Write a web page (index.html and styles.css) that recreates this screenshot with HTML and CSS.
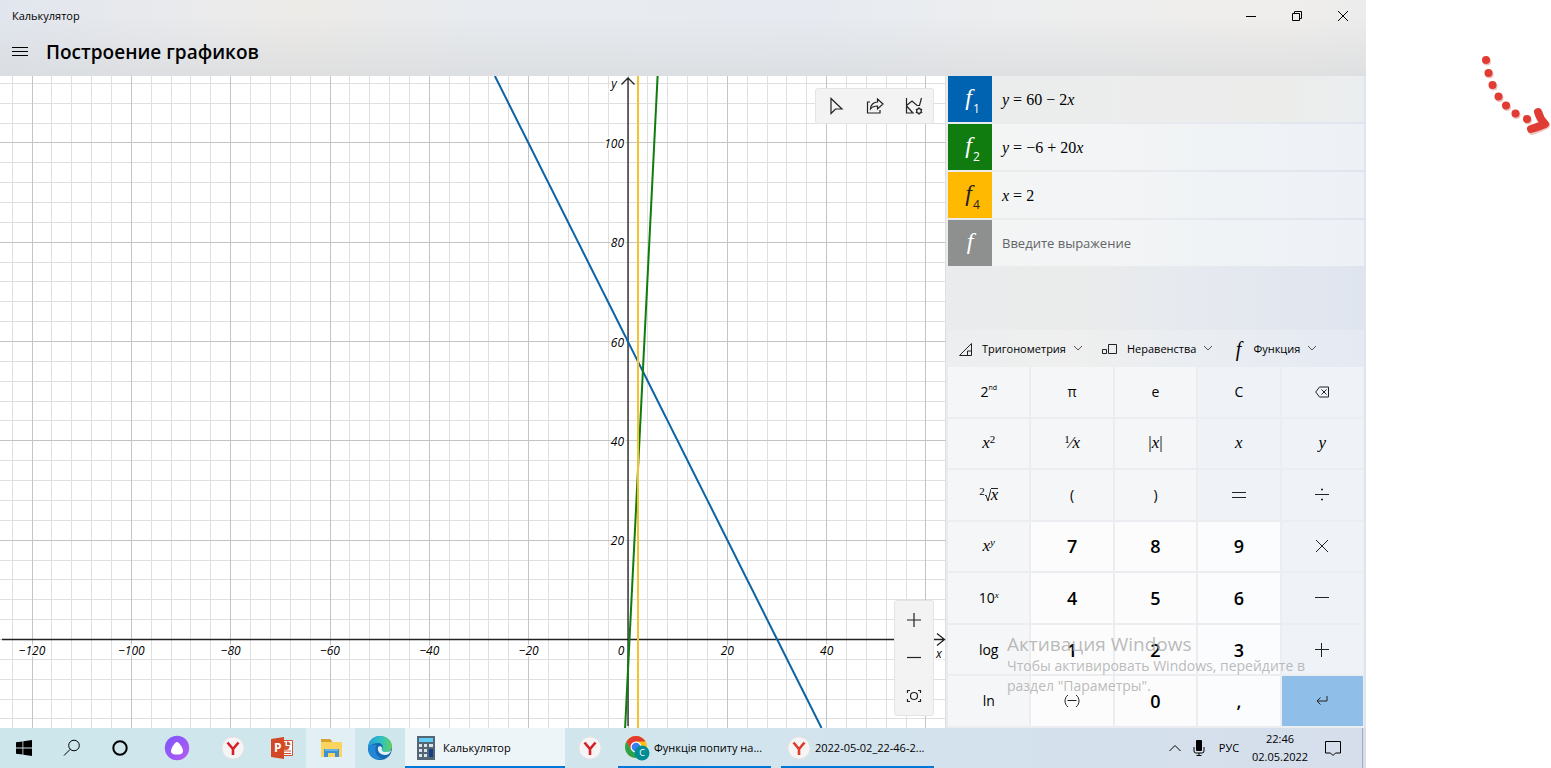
FILE: index.html
```html
<!DOCTYPE html>
<html lang="ru">
<head>
<meta charset="utf-8">
<title>Калькулятор</title>
<link rel="stylesheet" href="styles.css">
</head>
<body>
<div class="desktop">
  <main class="app">
    <header class="header">
      <div class="titlebar">
        <span class="app-name">Калькулятор</span>
        <div class="window-controls">
          <button aria-label="Свернуть"><svg width="10" height="10" viewBox="0 0 10 10"><path d="M0 5.5h10"/></svg></button>
          <button aria-label="Восстановить"><svg width="10" height="10" viewBox="0 0 10 10"><path d="M.5 2.5h7v7h-7zM2.5 2.5v-2h7v7h-2"/></svg></button>
          <button aria-label="Закрыть"><svg width="10" height="10" viewBox="0 0 10 10"><path d="M0 0l10 10M10 0L0 10"/></svg></button>
        </div>
      </div>
      <div class="mode">
        <button class="menu" aria-label="Меню"><svg width="16" height="10" viewBox="0 0 16 10"><path d="M0 .5h16M0 4.5h16M0 8.5h16"/></svg></button>
        <h1>Построение графиков</h1>
      </div>
    </header>

    <div class="work">
      <section class="plot">
        <svg class="chart" viewBox="0 0 946 652" preserveAspectRatio="xMidYMid slice">
          <g id="grid"></g>
          <path class="axis" d="M2 563.5H944M937 557.500l7.500 6l-7.500 6"/>
          <path class="axis" d="M628 650V3M621.500 8.500l6.500-6.500l6.500 6.500"/>
          <path class="curve blue" d="M494.900 0L821.500 652"/>
          <path class="curve green" d="M657.600 0L625.100 652"/>
          <path class="curve yellow" d="M638 0V652"/>
          <g id="labels">
            <text x="614" y="12" text-anchor="middle">y</text>
            <text x="939" y="582" text-anchor="middle">x</text>
          </g>
        </svg>
        <div class="float tools">
          <button aria-label="Трассировка"><svg width="20" height="20" viewBox="0 0 20 20"><path d="M5 2.500v15l4.500-4.500H16z"/></svg></button>
          <button aria-label="Поделиться"><svg width="20" height="20" viewBox="0 0 20 20"><path d="M5 6H2.500v11H15v-3M12.500 3l5.500 5-5.500 5v-3C9 10 7 11 5.500 13c0-4 3-7 7-7z"/></svg></button>
          <button aria-label="Параметры графа"><svg width="20" height="20" viewBox="0 0 20 20"><path d="M2.500 2v15H10M2.500 9.500L8 5l5 4.500h2.500L17.500 2M2.500 10l6 6.500"/><circle cx="15" cy="15" r="2.300"/><path d="M15 11.300v1.400m0 4.600v1.400m-3.200-5.500l1.200.7m4 2.200l1.200.7m0-3.600l-1.200.7m-4 2.200l-1.200.7"/></svg></button>
        </div>
        <div class="float zoom">
          <button aria-label="Увеличить"><svg width="16" height="16" viewBox="0 0 16 16"><path d="M1 8h14M8 1v14"/></svg></button>
          <button aria-label="Уменьшить"><svg width="16" height="16" viewBox="0 0 16 16"><path d="M1 7.500h14"/></svg></button>
          <button aria-label="По размеру"><svg width="16" height="16" viewBox="0 0 16 16"><path d="M4 2.500H1.500V5M12 2.500h2.500V5M4 13.500H1.500V11M12 13.500h2.500V11"/><circle cx="8" cy="8" r="3.500"/></svg></button>
        </div>
      </section>

      <section class="panel">
        <div class="equations">
          <div class="equation"><button class="fn fn-blue">f<sub>1</sub></button><div class="formula"><i>y</i> = 60 − 2<i>x</i></div></div>
          <div class="equation"><button class="fn fn-green">f<sub>2</sub></button><div class="formula"><i>y</i> = −6 + 20<i>x</i></div></div>
          <div class="equation"><button class="fn fn-yellow">f<sub>4</sub></button><div class="formula"><i>x</i> = 2</div></div>
          <div class="equation"><button class="fn fn-gray">f</button><input class="formula" type="text" aria-label="Выражение" placeholder="Введите выражение"></div>
        </div>
        <div class="categories">
          <button><svg width="16" height="16" viewBox="0 0 16 16"><path d="M1.500 14.500h12v-12zM9.500 14v-4h4"/></svg>Тригонометрия<svg class="chev" width="8" height="5" viewBox="0 0 8 5"><path d="M0 0l4 4 4-4"/></svg></button>
          <button><svg width="18" height="16" viewBox="0 0 18 16"><path d="M1.500 8.500h4v4h-4zM7.500 3.500h8v9h-8z"/></svg>Неравенства<svg class="chev" width="8" height="5" viewBox="0 0 8 5"><path d="M0 0l4 4 4-4"/></svg></button>
          <button><span class="f-icon">f</span>Функция<svg class="chev" width="8" height="5" viewBox="0 0 8 5"><path d="M0 0l4 4 4-4"/></svg></button>
        </div>
        <div class="keypad">
          <button class="second">2<sup>nd</sup></button><button>π</button><button>e</button><button>C</button>
          <button aria-label="Удалить"><svg width="14" height="12" viewBox="0 0 14 12"><path d="M4.500 1h9v10h-9L.7 6zM6.500 3.500l5 5m0-5l-5 5"/></svg></button>
          <button class="math"><span><i>x</i><sup>2</sup></span></button><button class="math"><span><sup>1</sup>⁄<i>x</i></span></button><button class="math"><span>|<i>x</i>|</span></button><button class="math"><i>x</i></button><button class="math"><i>y</i></button>
          <button class="math root"><sup>2</sup><svg width="6" height="14" viewBox="0 0 6 14"><path d="M0 8l1-1 2 6L6 1"/></svg><i class="radicand">x</i></button><button>(</button><button>)</button>
          <button aria-label="Равно"><svg width="14" height="14" viewBox="0 0 14 14"><path d="M0 4.500h14M0 9.500h14"/></svg></button>
          <button aria-label="Разделить"><svg width="14" height="14" viewBox="0 0 14 14"><path d="M0 6.500h14M6.500 1h1v1h-1zM6.500 11h1v1h-1z"/></svg></button>
          <button class="math"><span><i>x</i><sup><i>y</i></sup></span></button><button class="digit">7</button><button class="digit">8</button><button class="digit">9</button>
          <button aria-label="Умножить"><svg width="14" height="14" viewBox="0 0 14 14"><path d="M1 1l12 12M13 1L1 13"/></svg></button>
          <button><span>10<sup class="serif"><i>x</i></sup></span></button><button class="digit">4</button><button class="digit">5</button><button class="digit">6</button>
          <button aria-label="Вычесть"><svg width="14" height="14" viewBox="0 0 14 14"><path d="M0 6.500h14"/></svg></button>
          <button>log</button><button class="digit">1</button><button class="digit">2</button><button class="digit">3</button>
          <button aria-label="Сложить"><svg width="14" height="14" viewBox="0 0 14 14"><path d="M0 6.500h14M6.500 0v14"/></svg></button>
          <button>ln</button>
          <button class="digit" aria-label="Изменить знак"><svg width="16" height="14" viewBox="0 0 16 14"><path d="M4 1C0 4 0 10 4 13M12 1c4 3 4 9 0 12M3.500 6.500h9"/></svg></button>
          <button class="digit">0</button><button class="digit">,</button>
          <button class="enter" aria-label="Ввод"><svg width="12" height="12" viewBox="0 0 12 12"><path d="M11 1v5H1M4.500 2.500L1 6l3.500 3.500"/></svg></button>
        </div>
      </section>
    </div>

    <footer class="taskbar">
      <button class="task" aria-label="Пуск"><svg width="16" height="16" viewBox="0 0 16 16"><path fill="#000" d="M0 2.300l6.500-.9v6.200H0zM7.300 1.300L16 0v7.600H7.300zM0 8.400h6.500v6.200L0 13.700zM7.300 8.400H16V16l-8.700-1.300z"/></svg></button>
      <button class="task" aria-label="Поиск"><svg class="line" width="18" height="18" viewBox="0 0 18 18"><circle cx="11" cy="6.500" r="5.300"/><path d="M7.200 10.300L1 16.500"/></svg></button>
      <button class="task cortana" aria-label="Cortana"><svg width="18" height="18" viewBox="0 0 18 18"><circle cx="9" cy="9" r="6.700" fill="none" stroke="#000" stroke-width="2"/></svg></button>
      <button class="task alice" aria-label="Алиса"><svg width="26" height="26" viewBox="0 0 26 26"><defs><linearGradient id="al" x2="1" y2="1"><stop stop-color="#7b55ff"/><stop offset="1" stop-color="#b65cf0"/></linearGradient></defs><circle cx="13" cy="13" r="12.200" fill="url(#al)"/><path fill="#fff" d="M13 7c2 0 6 6 6 9s-3 3.500-6 3.500S7 19 7 16s4-9 6-9z"/></svg></button>
      <button class="task" aria-label="Яндекс"><svg width="24" height="24" viewBox="0 0 24 24"><circle cx="12" cy="12" r="11.200" fill="#f5f5f6" stroke="#dedfe3"/><path d="M6.500 6.500l5.500 6.500 5.500-6.500M12 12.500V19" fill="none" stroke="#d52027" stroke-width="2.600"/></svg></button>
      <button class="task" aria-label="PowerPoint"><svg width="24" height="24" viewBox="0 0 24 24"><path d="M12 4.500h10.500v15H12z" fill="#fff" stroke="#d35230"/><path d="M15.500 6v4h4a4 4 0 1 1-4-4zM17 5.500a4 4 0 0 1 3.500 3.500H17zM14 14.500h7v1h-7zM14 17h7v1h-7z" fill="#d35230"/><path d="M1 3l13-2v22L1 21z" fill="#d24726"/><text x="4" y="16" class="ppt">P</text></svg></button>
      <button class="task hot" aria-label="Проводник"><svg width="24" height="24" viewBox="0 0 24 24"><path d="M2 3h9l2 2v4H2z" fill="#d9a02b"/><path d="M2 6h21v15H2z" fill="#fbd45f"/><path d="M5 21v-8h15v8h-4v-4H9v4z" fill="#3f91d2"/><path d="M6 13h13v2H6z" fill="#65b4e8"/></svg></button>
      <button class="task edge" aria-label="Edge"><svg width="26" height="26" viewBox="0 0 26 26"><defs><linearGradient id="e1" x2="1" y2="0"><stop stop-color="#249bd8"/><stop offset=".55" stop-color="#2fc2c4"/><stop offset="1" stop-color="#66cf58"/></linearGradient></defs><circle cx="13" cy="13" r="12" fill="#1467b3"/><path d="M1 12C2 4 8 1 13 1c7 0 12 5 12 10 0 4-3 6-6 6-3 0-5-1-4-3 2-4-1-6-4-6-5 0-9 3-10 6z" fill="url(#e1)"/><path d="M1 14c2-4 6-5 9-4-3 4-2 11 5 13-8 4-14-3-14-9z" fill="#2187d5"/><path d="M11 12c1-1 4-1 4 1-1 3 1 4 4 4 3 0 4-1 5.500-2-1 3-3.500 5-6.500 5-5 0-8-4-7-8z" fill="#e2f1f4"/></svg></button>
      <button class="window active"><svg width="18" height="24" viewBox="0 0 18 24"><path fill="#536675" d="M0 0h18v24H0z"/><path fill="#62cdf3" d="M2 2h14v4H2z"/><path fill="#dce4e8" d="M2 8h3v3H2zM7 8h3v3H7zM2 13h3v3H2zM7 13h3v3H7zM2 18h3v3H2zM7 18h3v3H7zM12 8h4v3h-4z"/><path fill="#173e83" d="M12 13h4v8h-4z"/></svg><span>Калькулятор</span></button>
      <button class="task" aria-label="Яндекс Браузер"><svg width="24" height="24" viewBox="0 0 24 24"><circle cx="12" cy="12" r="11.200" fill="#f5f5f6" stroke="#dedfe3"/><path d="M6.500 6.500l5.500 6.500 5.500-6.500M12 12.500V19" fill="none" stroke="#d52027" stroke-width="2.600"/></svg></button>
      <button class="window chrome"><svg width="26" height="26" viewBox="0 0 26 26"><circle cx="12" cy="12" r="11" fill="#fbc116"/><path d="M2.500 6.500A11 11 0 0 1 21.500 6.500H12L7 15z" fill="#e33b2e"/><path d="M2.500 6.500A11 11 0 0 0 12 23l5-8H7.200z" fill="#2ba24c"/><circle cx="12" cy="12" r="5.500" fill="#fff"/><circle cx="12" cy="12" r="4.300" fill="#3b7ded"/><circle cx="18" cy="18" r="7.500" fill="#008c95"/><text x="18" y="21" text-anchor="middle" class="badge">C</text></svg><span>Функція попиту на...</span></button>
      <button class="window"><svg width="24" height="24" viewBox="0 0 24 24"><circle cx="12" cy="12" r="11.200" fill="#f5f5f6" stroke="#dedfe3"/><path d="M6.500 6.500l5.500 6.500 5.500-6.500M12 12.500V19" fill="none" stroke="#e03a2c" stroke-width="2.600"/></svg><span>2022-05-02_22-46-2...</span></button>
      <div class="tray">
        <button aria-label="Скрытые значки"><svg class="line" width="14" height="8" viewBox="0 0 14 8"><path d="M1.500 7L7 1.500 12.500 7"/></svg></button>
        <button aria-label="Микрофон"><svg width="12" height="16" viewBox="0 0 12 16"><rect x="3" width="6" height="11" rx="1" fill="#000"/><path d="M1 7v4q0 2 2 2h6q2 0 2-2V7M6 13v2.500M3.500 15.500h5" fill="none" stroke="#000"/></svg></button>
        <button class="lang">РУС</button>
        <button class="clock">22:46<br>02.05.2022</button>
        <button class="notes" aria-label="Уведомления"><svg class="line" width="18" height="18" viewBox="0 0 18 18"><path d="M1.500 2.500h15v11.500h-5L9 16.500 6.500 14h-5z"/></svg></button>
      </div>
    </footer>

    <div class="watermark">
      <p class="watermark-title">Активация Windows</p>
      <p>Чтобы активировать Windows, перейдите в раздел "Параметры".</p>
    </div>
  </main>

  <aside class="side">
    <svg width="72" height="90" viewBox="0 0 72 90">
      <g fill="#ecc5c2"><circle cx="8" cy="11.500" r="4"/><circle cx="10.500" cy="24.500" r="4"/><circle cx="14.500" cy="36.500" r="4"/><circle cx="20.500" cy="48" r="4"/><circle cx="28" cy="57" r="4"/><circle cx="37.500" cy="65" r="4"/><circle cx="49" cy="70.500" r="4"/></g>
      <path d="M60 63q1 7 7 12-7 4-14 6" fill="none" stroke="#ecc5c2" stroke-width="8" stroke-linecap="round" stroke-linejoin="round"/>
      <g fill="#e03c33"><circle cx="7" cy="10" r="4"/><circle cx="9.500" cy="23" r="4"/><circle cx="13.500" cy="35" r="4"/><circle cx="19.500" cy="46.500" r="4"/><circle cx="27" cy="55.500" r="4"/><circle cx="36.500" cy="63.500" r="4"/><circle cx="48" cy="69" r="4"/></g>
      <path d="M59 62q2 7 7 12-7 3-14 5" fill="none" stroke="#e03c33" stroke-width="8" stroke-linecap="round" stroke-linejoin="round"/>
    </svg>
  </aside>
</div>
<script src="plot.js"></script>
</body>
</html>
```
FILE: styles.css
```css
* { box-sizing: border-box; }
body { margin: 0; background: #fff; color: #000; font: 11px/16px "Open Sans", "Noto Sans", sans-serif; }
button { margin: 0; padding: 0; border: 0; background: none; color: inherit; font: inherit; display: flex; align-items: center; justify-content: center; }
svg { display: block; flex: none; }
h1, p { margin: 0; }
.desktop { display: flex; min-height: 100vh; }
.app { flex: 1; display: flex; flex-direction: column; position: relative; min-width: 0; }
.side { width: 185px; padding: 50px 0 0 113px; }

.header { height: 76px; background: linear-gradient(#e9edf000 20%, #d6d8daa0), linear-gradient(90deg, #e1e6ee, #ebebec 16%, #edebe8 22%, #e8ebef 34%, #e7ebf1 60%, #edeeef 75%, #f0eeec 94%, #ececec); }
.titlebar { display: flex; justify-content: space-between; height: 32px; padding-left: 12px; align-items: center; }
.window-controls { display: flex; height: 32px; }
.window-controls button { width: 46px; }
.window-controls svg, .menu svg, .line { fill: none; stroke: #000; }
.mode { display: flex; align-items: center; height: 40px; }
.menu { width: 40px; height: 40px; }
.mode h1 { margin-left: 6px; font-size: 19px; line-height: 24px; font-weight: 600; }

.work { flex: 1; display: flex; min-height: 0; }
.plot { flex: 1; position: relative; min-width: 0; overflow: hidden; background: #fff; }
.chart { position: absolute; inset: 0; width: 100%; height: 100%; }
.chart .minor { stroke: #dfdfdf; }
.chart .major { stroke: #c4c4c4; }
.chart .axis { fill: none; stroke: #222; stroke-width: 1.3; }
.curve { fill: none; stroke-width: 2; }
.blue { stroke: #0b63a5; }
.green { stroke: #107c10; }
.yellow { stroke: #f2c230; }
.chart text { font-size: 12px; font-style: italic; fill: #000; stroke: #fff; stroke-width: 3px; paint-order: stroke; }
.float { position: absolute; right: 12px; display: flex; background: #f3f3f3; border: 1px solid #e4e4e4; border-radius: 3px; }
.float svg { fill: none; stroke: #222; stroke-width: 1.2; }
.tools { top: 12px; }
.tools button { width: 39px; height: 34px; }
.zoom { bottom: 12px; flex-direction: column; }
.zoom button { width: 38px; height: 38px; }

.panel { width: 420px; padding: 0 2px; display: flex; flex-direction: column; background: linear-gradient(90deg, #e9ebed, #eaeceb 30%, #e6e9ef 60%, #dfe5ef); }
.equations { display: flex; flex-direction: column; gap: 2px; }
.equation { display: flex; height: 46px; background: linear-gradient(90deg, #f4f5f5, #f2f4f5 40%, #edf1f6); }
.equation:first-child { background: linear-gradient(90deg, #ebeded, #ececeb 80%, #ebeef0); }
.fn { width: 44px; color: #fff; font: italic 24px/32px "Liberation Serif", serif; padding-bottom: 4px; outline: 0; }
.fn sub { font: 12px/12px "Open Sans", sans-serif; align-self: flex-end; padding: 0 0 3px 1px; }
.fn:has(sub) { padding-left: 5px; }
.fn-blue { background: #0063b1; }
.fn-green { background: #107c10; }
.fn-yellow { background: #ffb900; color: #222; }
.fn-gray { background: #8e8f8f; }
.formula { flex: 1; min-width: 0; padding: 0 10px; font: 16px/48px "Liberation Serif", serif; white-space: nowrap; }
input.formula { border: 0; outline: 0; background: none; font: 13px/20px "Open Sans", sans-serif; }
input.formula::placeholder { color: #626466; opacity: 1; }
.categories { margin-top: auto; height: 37px; display: flex; gap: 19px; padding: 0 10px; background: #ffffff30; }
.categories button { gap: 8px; }
.categories svg, .keypad svg { fill: none; stroke: #222; }
.categories .chev { stroke: #555; }
.f-icon { font: italic 20px/20px "Liberation Serif", serif; width: 14px; }
.keypad { height: 361px; display: grid; grid-template-columns: repeat(5, 1fr); grid-auto-rows: 1fr; gap: 2px; padding: 0 1px 2px 0; background: #ebedf1; }
.keypad button { background: #f5f6f7; font-size: 14px; line-height: 20px; }
.keypad button:nth-child(5n+4), .keypad button:nth-child(5n) { background: #eff3f8; }
.keypad sup { font-size: 9px; line-height: 8px; vertical-align: 5px; }
.keypad button > sup { align-self: center; padding-bottom: 8px; }
.keypad .second sup { font-size: 7px; }
.keypad .math, .serif { font-family: "Liberation Serif", serif; }
.keypad .math { font-size: 17px; }
.keypad .math sup { font-size: 11px; }
.keypad .radicand { border-top: 1px solid #222; line-height: 12px; }
.keypad .digit { background: #fcfcfd; font-size: 18px; font-weight: 600; }
.keypad .digit:nth-child(5n+4) { background: #fafcfe; }
.keypad .enter:nth-child(5n) { background: #8fbee8; }

.taskbar { height: 40px; display: flex; align-items: stretch; background: linear-gradient(90deg, #cde6ec, #d0e6ed 35%, #d3e3ed 65%, #d6deeb); }
.task { width: 49px; }
.task:nth-child(-n+3) { width: 48px; }
.alice { margin: 0 7px 0 8px; }
.hot { background: #e2f0f5; }
.window { display: flex; justify-content: flex-start; gap: 4px; width: 153px; padding: 2px 6px 0; border-bottom: 2px solid #0078d7; white-space: nowrap; overflow: hidden; }
.active { width: 160px; padding: 2px 12px 0; gap: 8px; background: #edf5f8; margin-left: 1px; }
.chrome { margin: 0 10px 0 4px; }
.ppt { fill: #fff; font-size: 12px; font-weight: 700; }
.badge { fill: #fff; font-size: 9px; }
.tray { margin-left: auto; display: flex; border-right: 1px solid #9faebf; margin-right: 3px; }
.tray button { width: 24px; }
.tray .lang { width: 36px; }
.tray .clock { width: 66px; line-height: 18px; }
.tray .notes { width: 40px; margin-right: 9px; }

.watermark { position: absolute; right: 39px; bottom: 72px; width: 320px; color: #a9a9a9cc; font-size: 14px; line-height: 20px; pointer-events: none; }
.watermark-title { font-size: 19px; line-height: 24px; }
```
FILE: plot.js
```js
const NS = "http://www.w3.org/2000/svg";
const ORIGIN = { x: 628, y: 563.5 };
const UNIT = 4.966;
const grid = document.getElementById("grid");
const labels = document.getElementById("labels");

function line(cls, d) {
  const path = document.createElementNS(NS, "path");
  path.setAttribute("class", cls);
  path.setAttribute("d", d);
  grid.append(path);
}

function label(text, x, y, anchor) {
  const node = document.createElementNS(NS, "text");
  node.setAttribute("x", x);
  node.setAttribute("y", y);
  node.setAttribute("text-anchor", anchor);
  node.textContent = text;
  labels.append(node);
}

for (const cls of ["minor", "major"]) {
  for (let v = -124; v <= 64; v += 4) {
    if ((v % 20 === 0) !== (cls === "major")) continue;
    line(cls, `M${Math.floor(ORIGIN.x + v * UNIT) + 0.5} 0V652`);
  }
  for (let v = -16; v <= 112; v += 4) {
    if ((v % 20 === 0) !== (cls === "major")) continue;
    line(cls, `M0 ${Math.floor(ORIGIN.y - v * UNIT) + 0.5}H946`);
  }
}

for (let v = -120; v <= 40; v += 20) {
  if (v === 0) label("0", ORIGIN.x - 7, 579, "middle");
  else label(String(v).replace("-", "−"), ORIGIN.x + v * UNIT, 579, "middle");
}
for (let v = 20; v <= 100; v += 20) {
  label(v, ORIGIN.x - 4, ORIGIN.y - v * UNIT + 5, "end");
}
```
